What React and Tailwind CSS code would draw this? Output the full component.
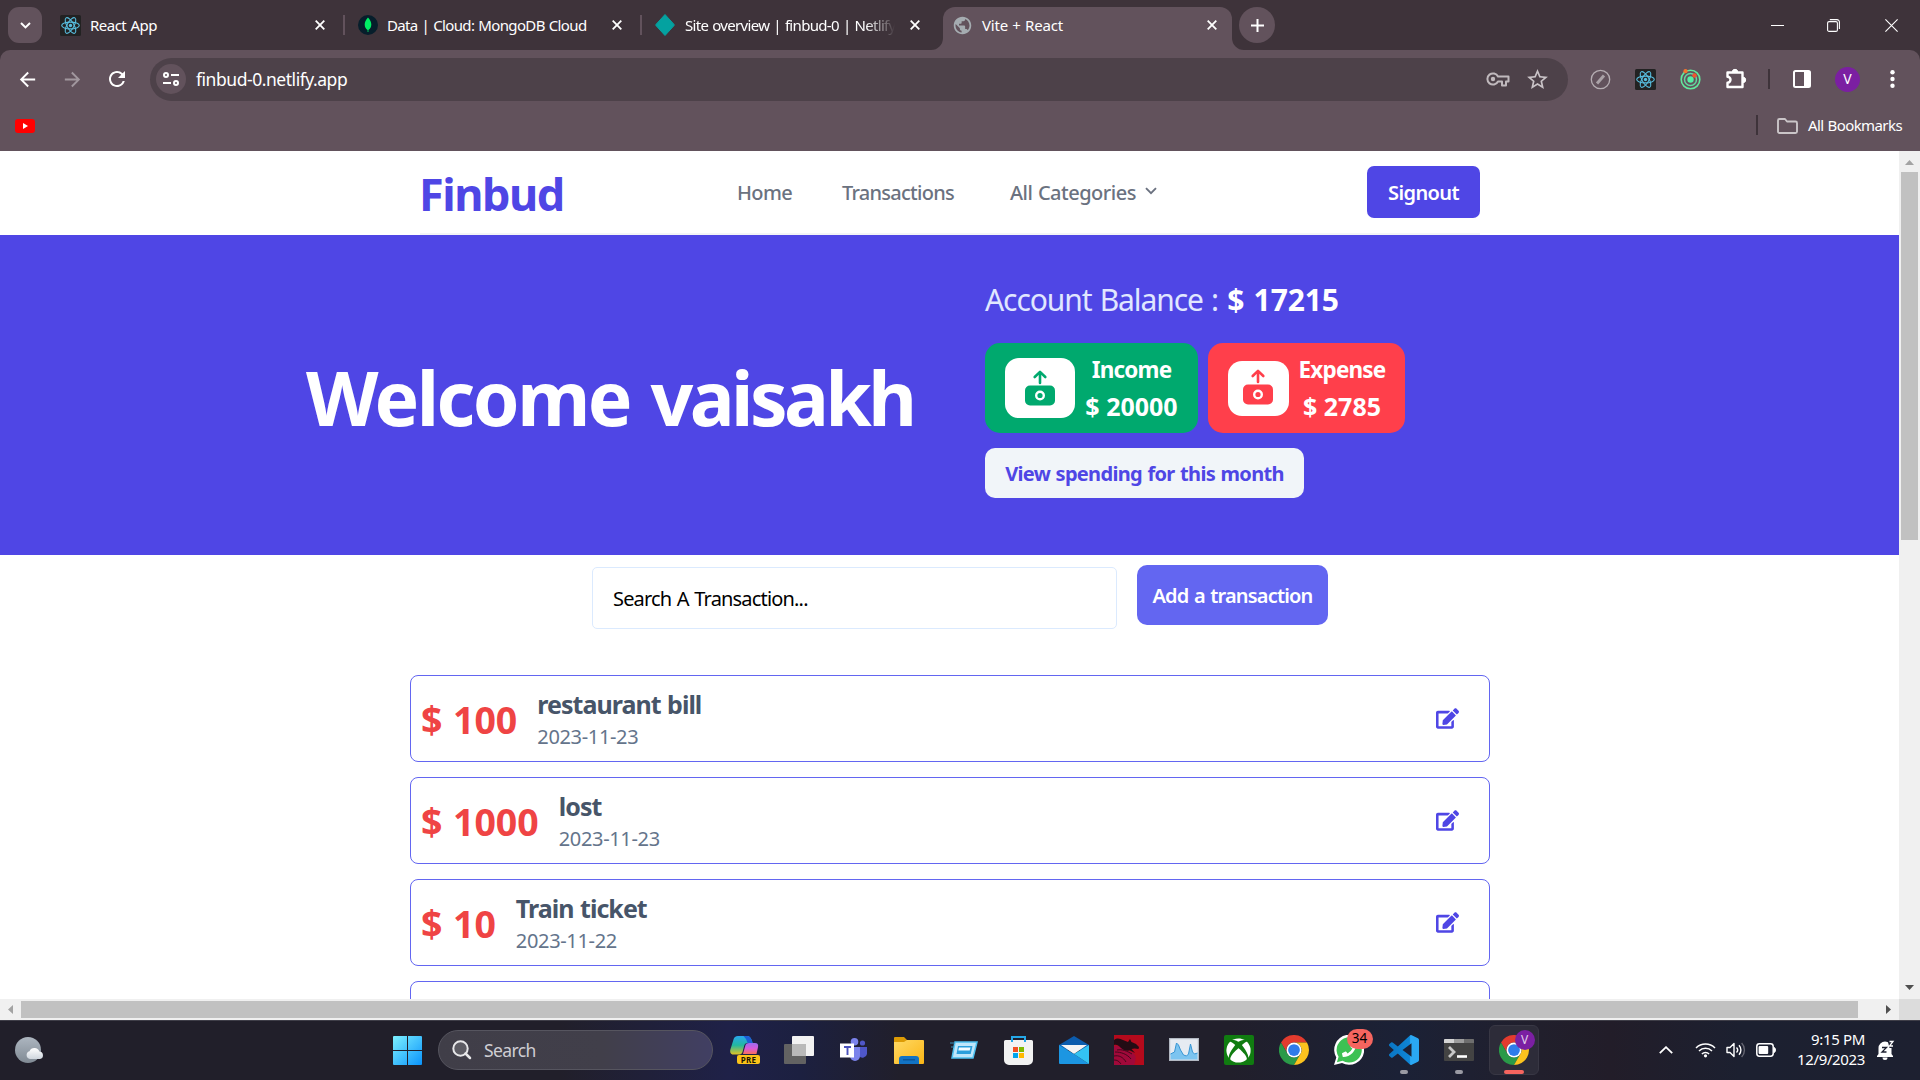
import React from 'react';
import { MdArrowBack, MdArrowForward, MdRefresh, MdOutlineVpnKey, MdStarBorder, MdFolderOpen, MdPublic } from 'react-icons/md';
import { FaEdit, FaXbox, FaPhoneAlt } from 'react-icons/fa';

/* ---------- shared glyphs ---------- */

function CloseGlyph() {
  return (
    <svg className="h-[10px] w-[10px] shrink-0" viewBox="0 0 10 10" stroke="#fff" strokeWidth="1.8">
      <path d="M.7.7 9.3 9.3M9.3.7.7 9.3" />
    </svg>
  );
}

function ReactBadge() {
  return (
    <svg className="h-[21px] w-[21px] shrink-0" viewBox="0 0 21 21" fill="none">
      <rect width="21" height="21" rx="1.5" fill="#222" />
      <g stroke="#58bfe0" strokeWidth="1.1">
        <ellipse cx="10.5" cy="10.5" rx="8.8" ry="3.4" />
        <ellipse cx="10.5" cy="10.5" rx="8.8" ry="3.4" transform="rotate(60 10.5 10.5)" />
        <ellipse cx="10.5" cy="10.5" rx="8.8" ry="3.4" transform="rotate(120 10.5 10.5)" />
      </g>
      <circle cx="10.5" cy="10.5" r="1.7" fill="#58bfe0" />
    </svg>
  );
}

function ChromeLogo() {
  return (
    <svg className="h-[30px] w-[30px]" viewBox="0 0 48 48">
      <path fill="#e33b2e" d="M24 12H44.78A24 24 0 0 0 3.2 12L13.6 30A12 12 0 0 1 24 12Z" />
      <path fill="#2a9a48" d="M3.2 12A24 24 0 0 0 24 48L34.4 30A12 12 0 0 1 13.6 30Z" />
      <path fill="#fcc31e" d="M24 48A24 24 0 0 0 44.78 12H24A12 12 0 0 1 34.4 30Z" />
      <circle cx="24" cy="24" r="12" fill="#fff" />
      <circle cx="24" cy="24" r="9.4" fill="#2f7bea" />
    </svg>
  );
}

/* ---------- browser chrome ---------- */

function TabStrip() {
  return (
    <div className="flex h-[50px] items-center bg-[#3e333a] text-[15px] leading-[20px] whitespace-nowrap text-white">
      <div className="ml-[8px] flex h-[36px] w-[34px] items-center justify-center rounded-[11px] bg-[#62525c]">
        <svg className="h-[7px] w-[11px]" viewBox="0 0 11 7" fill="none" stroke="#fff" strokeWidth="2">
          <path d="M1 1 5.5 5.4 10 1" />
        </svg>
      </div>

      <div className="ml-[18px] flex w-[265px] items-center">
        <ReactBadge />
        <span className="ml-[9px] tracking-[-0.034em] [word-spacing:0.05em]">React App</span>
        <span className="ml-auto"><CloseGlyph /></span>
      </div>
      <div className="ml-[18px] h-[20px] w-[2px] bg-[#62525c]" />

      <div className="ml-[13px] flex w-[264px] items-center">
        <svg className="h-[20px] w-[20px]" viewBox="0 0 20 20">
          <circle cx="10" cy="10" r="10" fill="#061e2b" />
          <path d="M10 2.600c2.200 2.400 3.300 4.400 3.300 7 0 2.400-1.100 4.200-2.900 5.500v2h-.8v-2C7.800 13.800 6.700 12 6.700 9.600c0-2.600 1.100-4.600 3.300-7z" fill="#00ed64" />
        </svg>
        <span className="ml-[9px] tracking-[-0.043em] [word-spacing:0.05em]">Data | Cloud: MongoDB Cloud</span>
        <span className="ml-auto"><CloseGlyph /></span>
      </div>
      <div className="ml-[18px] h-[20px] w-[2px] bg-[#62525c]" />

      <div className="ml-[13px] flex w-[265px] items-center">
        <svg className="h-[24px] w-[20px] shrink-0" viewBox="0 0 20 24">
          <path d="M10 1.500 19 11.400a.9.9 0 0 1 0 1.200L10 22.500 1 12.600a.9.9 0 0 1 0-1.200z" fill="#04a2a0" stroke="#04a2a0" strokeWidth="1" strokeLinejoin="round" />
        </svg>
        <span className="ml-[10px] w-[210px] overflow-hidden tracking-[-0.045em] [mask-image:linear-gradient(to_right,#000_86%,transparent)] [word-spacing:0.05em]">
          Site overview | finbud-0 | Netlify
        </span>
        <span className="ml-auto"><CloseGlyph /></span>
      </div>

      <div className="relative ml-[23px] flex h-[43px] w-[289px] items-center self-end rounded-t-[12px] bg-[#62525c] pb-[7px] pl-[10px]">
        <svg className="absolute bottom-0 -left-[12px] h-[12px] w-[12px]" viewBox="0 0 12 12">
          <path d="M12 0v12H0A12 12 0 0 0 12 0z" fill="#62525c" />
        </svg>
        <svg className="absolute -right-[12px] bottom-0 h-[12px] w-[12px]" viewBox="0 0 12 12">
          <path d="M0 0v12h12A12 12 0 0 1 0 0z" fill="#62525c" />
        </svg>
        <MdPublic className="-ml-[1px] h-[21px] w-[21px] text-[#a5acb1]" />
        <span className="ml-[9px] tracking-[-0.012em] [word-spacing:0.04em]">Vite + React</span>
        <span className="mr-[15px] ml-auto"><CloseGlyph /></span>
      </div>

      <div className="ml-[7px] flex h-[36px] w-[36px] items-center justify-center rounded-full bg-[#62525c]">
        <svg className="h-[13px] w-[13px]" viewBox="0 0 13 13" stroke="#fff" strokeWidth="2">
          <path d="M6.500 0v13M0 6.500h13" />
        </svg>
      </div>

      <div className="mr-[22px] ml-auto flex items-center">
        <div className="h-[1px] w-[13px] bg-white" />
        <svg className="ml-[43px] h-[13px] w-[13px]" viewBox="0 0 13 13" fill="none" stroke="#fff" strokeWidth="1.100">
          <rect x=".6" y="2.600" width="9.800" height="9.800" rx="1.500" />
          <path d="M2.800.6h7.200a2.400 2.400 0 0 1 2.400 2.400v7" />
        </svg>
        <svg className="ml-[45px] h-[13px] w-[13px]" viewBox="0 0 13 13" stroke="#fff" strokeWidth="1.100">
          <path d="M.4.4 12.600 12.600M12.600.4.4 12.600" />
        </svg>
      </div>
    </div>
  );
}

function Toolbar() {
  return (
    <div className="bg-[#3e333a]">
      <div className="flex h-[58px] items-center rounded-t-[10px] bg-[#62525c]">
        <MdArrowBack className="ml-[16px] h-[23px] w-[23px] text-white" />
        <MdArrowForward className="ml-[22px] h-[23px] w-[23px] text-[#a1979e]" />
        <MdRefresh className="ml-[21px] h-[24px] w-[24px] text-white" />
        <div className="ml-[21px] flex h-[43px] w-[1418px] items-center rounded-full bg-[#4d4149]">
          <div className="ml-[6px] flex h-[30px] w-[30px] items-center justify-center rounded-full bg-[#62525c]">
            <svg className="h-[14px] w-[16px]" viewBox="0 0 16 14" fill="none" stroke="#fff" strokeWidth="2">
              <circle cx="3" cy="3" r="2" />
              <path d="M8 3h8M0 11h8" />
              <circle cx="13" cy="11" r="2" />
            </svg>
          </div>
          <span className="ml-[10px] text-[17.5px] leading-[24px] tracking-[-0.026em] text-white">finbud-0.netlify.app</span>
          <svg className="ml-auto h-[16px] w-[24px]" viewBox="0 0 24 16" fill="none" stroke="#c0b9bd" strokeWidth="2">
            <path d="M12 5.500A5.600 5.600 0 1 0 12 10.500h4v4h4v-4h2.500v-5z" strokeLinejoin="round" />
            <circle cx="7" cy="8" r="2.200" fill="#c0b9bd" stroke="none" />
          </svg>
          <MdStarBorder className="mr-[18px] ml-[15px] h-[25px] w-[25px] text-[#c9c3c7]" />
        </div>
        <svg className="ml-[22px] h-[21px] w-[21px]" viewBox="0 0 21 21" fill="none">
          <circle cx="10.500" cy="10.500" r="9.200" stroke="#b5adb2" strokeWidth="1.300" />
          <path d="m7 14.500 7-8" stroke="#aaa2a7" strokeWidth="3" />
        </svg>
        <div className="ml-[24px]"><ReactBadge /></div>
        <svg className="ml-[24px] h-[21px] w-[21px]" viewBox="0 0 21 21" fill="none">
          <circle cx="10.500" cy="10.500" r="9.300" stroke="#62e89c" strokeWidth="1.600" />
          <circle cx="10.500" cy="10.500" r="6" stroke="#62d8a0" strokeWidth="1.500" />
          <circle cx="10.500" cy="10.500" r="3.200" fill="#54f0a4" />
          <circle cx="5.500" cy="2.200" r="2.100" fill="#f5762c" />
          <circle cx="14.500" cy="6.500" r="2.200" fill="#f1562f" />
        </svg>
        <svg className="ml-[24px] h-[22px] w-[22px]" viewBox="0 0 22 22" fill="none">
          <path d="M2.500 4.500h15v14.500H2.500v-4.200a3 3 0 0 0 0-6z" stroke="#fff" strokeWidth="2.400" strokeLinejoin="round" />
          <path d="M7.300 4a2.700 2.700 0 0 1 5.400 0zM18 9.200a2.700 2.700 0 0 1 0 5.400z" fill="#fff" stroke="#fff" />
        </svg>
        <div className="ml-[21px] h-[20px] w-[2px] bg-[#3e333a]" />
        <svg className="ml-[23px] h-[18px] w-[18px]" viewBox="0 0 18 18">
          <rect x="1" y="1" width="16" height="16" rx="1.500" fill="none" stroke="#fff" strokeWidth="2" />
          <rect x="11" y="1" width="6" height="16" fill="#fff" />
        </svg>
        <div className="ml-[24px] flex h-[25px] w-[25px] items-center justify-center rounded-full bg-[#7b1fa2] text-[14px] leading-none text-white">V</div>
        <svg className="ml-[30px] h-[18px] w-[5px]" viewBox="0 0 5 18" fill="#fff">
          <circle cx="2.500" cy="2.200" r="2.200" />
          <circle cx="2.500" cy="9" r="2.200" />
          <circle cx="2.500" cy="15.800" r="2.200" />
        </svg>
      </div>
    </div>
  );
}

function BookmarksBar() {
  return (
    <div className="flex h-[43px] items-center bg-[#62525c] pb-[7px]">
      <svg className="ml-[15px] h-[14px] w-[20px]" viewBox="0 0 20 14">
        <rect width="20" height="14" rx="3" fill="#f00" />
        <path d="M8 4v6l5-3z" fill="#fff" />
      </svg>
      <div className="mb-[2px] ml-auto h-[20px] w-[2px] bg-[#3e333a]" />
      <svg className="mb-px ml-[19px] h-[16px] w-[21px]" viewBox="0 0 21 16" fill="none" stroke="#cac5c8" strokeWidth="1.900">
        <path d="M1 2.500A1.500 1.500 0 0 1 2.500 1H8l2 2.500h8.500A1.500 1.500 0 0 1 20 5v8.500a1.500 1.500 0 0 1-1.500 1.500h-16A1.500 1.500 0 0 1 1 13.500z" strokeLinejoin="round" />
      </svg>
      <span className="mr-[18px] mb-[2px] ml-[10px] text-[15px] leading-[20px] tracking-[-0.039em] text-white [word-spacing:0.04em]">All Bookmarks</span>
    </div>
  );
}

/* ---------- page ---------- */

function NavBar() {
  return (
    <nav className="h-[84px] shrink-0">
      <div className="ml-[420px] flex h-[84px] w-[1060px] items-center border-b-2 border-[#f3f4f6] text-[20px] leading-[30px] font-medium whitespace-nowrap text-[#6b7280]">
        <span className="-ml-px w-[318px] pt-[4px] text-[45px] leading-[50px] font-bold tracking-[-0.033em] text-[#4f46e5]">Finbud</span>
        <span className="w-[105px] pt-[2px] tracking-[-0.03em]">Home</span>
        <span className="w-[168px] pt-[2px] tracking-[-0.037em]">Transactions</span>
        <span className="w-[135px] pt-[2px] tracking-[-0.025em] [word-spacing:0.04em]">All Categories</span>
        <svg className="-mt-[2px] h-[8px] w-[12px]" viewBox="0 0 12 8" fill="none" stroke="#6b7280" strokeWidth="1.900">
          <path d="M1 1.200 6 6.200 11 1.200" />
        </svg>
        <button className="ml-auto h-[52px] w-[113px] rounded-[7px] bg-[#4f46e5] pt-[2px] font-semibold tracking-[-0.03em] text-white">Signout</button>
      </div>
    </nav>
  );
}

function MoneyIcon({ color }) {
  return (
    <svg className="h-[36px] w-[30px]" viewBox="0 0 30 36" fill="none">
      <path d="M15 13V2.500M9.700 7 15 1.900 20.300 7" stroke={color} strokeWidth="2.600" strokeLinecap="round" strokeLinejoin="round" />
      <rect y="15.500" width="30" height="20" rx="5" fill={color} />
      <circle cx="15" cy="25.500" r="3.800" stroke="#fff" strokeWidth="2.400" />
    </svg>
  );
}

function Hero() {
  return (
    <section className="flex h-[320px] shrink-0 bg-[#4f46e5] whitespace-nowrap text-white">
      <h1 className="ml-[306px] w-[679px] pt-[115px] text-[75px] leading-[94px] font-bold tracking-[-0.0335em] [word-spacing:0.045em]">
        Welcome <span className="tracking-[-0.0475em]">vaisakh</span>
      </h1>
      <div className="pt-[45px]">
        <p className="text-[30px] leading-[40px] tracking-[-0.036em] text-[#e0e7ff] [word-spacing:0.05em]">
          Account Balance : <b className="ml-[1px] font-bold tracking-[-0.003em] text-white">$ 17215</b>
        </p>
        <div className="mt-[23px] flex gap-[10px] text-center font-bold">
          <div className="flex h-[90px] w-[213px] items-center rounded-[15px] bg-[#00a96e] pl-[20px]">
            <div className="flex h-[60px] w-[70px] items-center justify-center rounded-[14px] bg-white"><MoneyIcon color="#00a96e" /></div>
            <div className="w-[113px]">
              <p className="text-[22.5px] leading-[36px] tracking-[-0.036em]">Income</p>
              <p className="text-[25px] leading-[36px]">$ 20000</p>
            </div>
          </div>
          <div className="flex h-[90px] w-[197px] items-center rounded-[15px] bg-[#ff3f4b] pl-[20px]">
            <div className="flex h-[55px] w-[61px] items-center justify-center rounded-[14px] bg-white pr-px pb-[2px]"><MoneyIcon color="#ff3f4b" /></div>
            <div className="w-[106px]">
              <p className="text-[22.5px] leading-[36px] tracking-[-0.036em]">Expense</p>
              <p className="text-[25px] leading-[36px]">$ 2785</p>
            </div>
          </div>
        </div>
        <button className="mt-[15px] h-[50px] w-[319px] rounded-[10px] bg-[#f1f5f9] pt-[2px] text-[20px] leading-[30px] font-bold tracking-[-0.0335em] text-[#4f46e5] [word-spacing:0.045em]">
          View spending for this month
        </button>
      </div>
    </section>
  );
}

const transactions = [
  { amount: '$ 100', title: 'restaurant bill', date: '2023-11-23' },
  { amount: '$ 1000', title: 'lost', date: '2023-11-23' },
  { amount: '$ 10', title: 'Train ticket', date: '2023-11-22' },
];

function TransactionCard({ amount, title, date }) {
  return (
    <li className="flex h-[87px] shrink-0 rounded-[8px] border border-[#6366f1] pr-[30px] pl-[10px]">
      <span className="pt-[19px] text-[37.5px] leading-[50px] font-bold text-[#ef4444] [word-spacing:0.02em]">{amount}</span>
      <div className="ml-[20px] pt-[12px]">
        <p className="text-[25px] leading-[32px] font-bold tracking-[-0.039em] text-[#475569] [word-spacing:0.04em]">{title}</p>
        <p className="mt-px text-[20px] leading-[31px] tracking-[-0.017em] text-[#64748b]">{date}</p>
      </div>
      <FaEdit className="mt-[32px] ml-auto h-[21px] w-[23px] text-[#4f46e5]" />
    </li>
  );
}

function Page() {
  return (
    <main className="flex h-[848px] w-[1899px] flex-col overflow-hidden bg-white">
      <NavBar />
      <Hero />
      <div className="mt-[10px] ml-[592px] flex h-[110px] shrink-0 items-start gap-[20px] text-[20px]">
        <input
          className="mt-[2px] h-[62px] w-[525px] rounded-[5px] border border-[#dbeafe] px-[20px] tracking-[-0.041em] [word-spacing:0.055em] placeholder:text-black"
          placeholder="Search A Transaction..."
        />
        <button className="h-[60px] w-[191px] rounded-[10px] bg-[#6366f1] pt-[2px] font-semibold tracking-[-0.041em] text-white [word-spacing:0.05em]">Add a transaction</button>
      </div>
      <ul className="ml-[410px] flex w-[1080px] flex-col gap-[15px]">
        {transactions.map((t) => <TransactionCard key={t.title} {...t} />)}
        <li className="h-[87px] shrink-0 rounded-[8px] border border-[#6366f1]" />
      </ul>
    </main>
  );
}

function VerticalScrollbar() {
  return (
    <div className="flex h-[848px] w-[21px] flex-col items-center bg-[#f0f0f0]">
      <svg className="mt-[9px] h-[5px] w-[9px]" viewBox="0 0 9 5"><path d="M4.500 0 9 5H0z" fill="#a3a3a3" /></svg>
      <div className="mt-[7px] h-[368px] w-[17px] bg-[#c1c1c1]" />
      <svg className="mt-auto mb-[9px] h-[5px] w-[9px]" viewBox="0 0 9 5"><path d="M0 0h9L4.500 5z" fill="#4f4f4f" /></svg>
    </div>
  );
}

function HorizontalScrollbar() {
  return (
    <div className="flex h-[21px] items-center bg-[#f0f0f0]">
      <svg className="ml-[8px] h-[9px] w-[5px]" viewBox="0 0 5 9"><path d="M5 0v9L0 4.500z" fill="#a3a3a3" /></svg>
      <div className="ml-[8px] h-[17px] w-[1837px] bg-[#c1c1c1]" />
      <svg className="ml-[28px] h-[9px] w-[5px]" viewBox="0 0 5 9"><path d="M0 0v9l5-4.500z" fill="#4f4f4f" /></svg>
      <div className="ml-auto h-[21px] w-[21px] bg-[#dcdcdc]" />
    </div>
  );
}

/* ---------- taskbar ---------- */

function Slot({ children }) {
  return <div className="flex h-[60px] w-[55px] shrink-0 items-center justify-center">{children}</div>;
}

function Taskbar() {
  return (
    <div className="flex h-[60px] items-center border-t border-[#3f3e48] bg-[linear-gradient(90deg,#211f2a_0,#211f2a_560px,#1f2148_730px,#1c2040_800px,#211f2b_900px,#211f2b_1230px,#1b2136_1400px,#211f2c_1540px,#221d29_1610px,#1c2030_1740px,#1d2030_1920px)] pb-px text-white">
      <svg className="ml-[15px] h-[28px] w-[29px]" viewBox="0 0 29 28">
        <defs>
          <linearGradient id="moon" x1="0" y1="0" x2="0" y2="1"><stop stopColor="#adb6c0" /><stop offset="1" stopColor="#808a94" /></linearGradient>
          <linearGradient id="cloud" x1="0" y1="0" x2="0" y2="1"><stop stopColor="#fff" /><stop offset="1" stopColor="#cfd6de" /></linearGradient>
        </defs>
        <circle cx="13" cy="14" r="13" fill="url(#moon)" />
        <path d="M15 23a4 4 0 0 1-.5-7.800A5.300 5.300 0 0 1 24.400 15.500a3.800 3.800 0 0 1 .6 7.500z" fill="url(#cloud)" />
      </svg>

      <svg className="ml-[349px] h-[29px] w-[29px]" viewBox="0 0 29 29">
        <defs>
          <linearGradient id="win" gradientUnits="userSpaceOnUse" x1="0" y1="0" x2="29" y2="29"><stop stopColor="#7df1ff" /><stop offset="1" stopColor="#0a93fb" /></linearGradient>
        </defs>
        <path d="M1 0h13v14H0V1a1 1 0 0 1 1-1zM15 0h13a1 1 0 0 1 1 1v13H15zM0 15h14v14H1a1 1 0 0 1-1-1zM15 15h14v13a1 1 0 0 1-1 1H15z" fill="url(#win)" />
      </svg>

      <div className="ml-[16px] flex h-[40px] w-[275px] items-center rounded-full border border-[#56555f] bg-[linear-gradient(90deg,#403e48,#413f4a_60%,#413f63)]">
        <svg className="ml-[13px] h-[20px] w-[20px]" viewBox="0 0 20 20" fill="none" stroke="#e8e8ea" strokeWidth="2">
          <circle cx="8.500" cy="8.500" r="7.200" fill="#5d5c64" />
          <path d="m13.500 13.500 4.500 4.500" strokeWidth="2.500" strokeLinecap="round" />
        </svg>
        <span className="ml-[12px] text-[17.5px] leading-[24px] tracking-[-0.035em] text-[#cfced3]">Search</span>
      </div>

      <div className="ml-[3px] flex">
        <Slot>
          <svg className="ml-[2px] h-[28px] w-[30px]" viewBox="0 0 30 28">
            <defs>
              <linearGradient id="cpa" x1="0" y1="0" x2="0" y2="1"><stop stopColor="#2aa7ee" /><stop offset=".5" stopColor="#22b8a0" /><stop offset="1" stopColor="#e4c422" /></linearGradient>
              <linearGradient id="cpb" x1="0" y1="0" x2="0" y2="1"><stop stopColor="#9a6cf0" /><stop offset=".5" stopColor="#d85ad8" /><stop offset="1" stopColor="#f8705a" /></linearGradient>
            </defs>
            <path d="M8 0h9c3 0 4 2 5 5l.6 2h-5c-2 0-3 1-3.500 3l-1.600 6c-.5 1.500-1.500 2.500-3 2.500H4c-3 0-4.500-2-3.600-5L3.500 3.500C4 1.200 5.500 0 8 0z" fill="url(#cpa)" />
            <path d="M13.500 0H17c3 0 4 2 5 5l.6 2h-5L16 3z" fill="#1c5fd6" />
            <path d="M19 7h6c2.500 0 3.500 1.500 3 4l-1.500 7H13l2.500-9c.4-1.300 1.800-2 3.500-2z" fill="url(#cpb)" />
            <rect x="7" y="19" width="23" height="9" rx="2" fill="#fcc419" />
            <text x="18.500" y="26.600" fontSize="8" fontWeight="700" textAnchor="middle" fill="#1a1500" letterSpacing=".3">PRE</text>
          </svg>
        </Slot>
        <Slot>
          <svg className="h-[28px] w-[30px]" viewBox="0 0 30 28">
            <rect x="8" y="0" width="22" height="20" rx="1" fill="#f2f2f2" />
            <rect x="0" y="8" width="22" height="20" rx="1" fill="#626262" />
            <rect x="8" y="8" width="14" height="12" fill="#b9b9b9" />
          </svg>
        </Slot>
        <Slot>
          <svg className="-mt-px h-[24px] w-[27px]" viewBox="0 0 27 24">
            <circle cx="22.500" cy="5" r="2.600" fill="#4f57c9" />
            <circle cx="14.500" cy="3.800" r="3.800" fill="#7b83eb" />
            <path d="M19 9h8v7a4.500 4.500 0 0 1-8 2z" fill="#4f57c9" />
            <path d="M10 9h10v9a5 5 0 0 1-10 0z" fill="#7b83eb" />
            <rect y="5.500" width="14" height="14" fill="#fff" />
            <path d="M4 9h7M7.500 9v8" stroke="#4b53bc" strokeWidth="1.900" />
          </svg>
        </Slot>
        <Slot>
          <svg className="h-[27px] w-[30px]" viewBox="0 0 30 27">
            <defs><linearGradient id="fold" x1="0" y1="0" x2="1" y2="1"><stop stopColor="#ffd964" /><stop offset="1" stopColor="#fbb515" /></linearGradient></defs>
            <path d="M0 1a1 1 0 0 1 1-1h9l3 3v5H0z" fill="#dd9b05" />
            <path d="M0 5h10l3-2h16a1 1 0 0 1 1 1v22a1 1 0 0 1-1 1H1a1 1 0 0 1-1-1z" fill="url(#fold)" />
            <path d="M5 27v-5a3 3 0 0 1 3-3h14a3 3 0 0 1 3 3v5z" fill="#1273c4" />
            <path d="M9 22.800h12" stroke="#0a4f92" strokeWidth="1.200" />
          </svg>
        </Slot>
        <Slot>
          <svg className="h-[18px] w-[28px]" viewBox="0 0 28 18">
            <path d="M5 1h22l-4 16H2z" fill="#bfe6fa" stroke="#4cc0f0" strokeWidth="1.500" />
            <path d="M8 5h14.500l-1.800 8H6.500z" fill="#2b9fdc" />
            <path d="M9 6.500h11.500l-.8 3H8.300z" fill="#f3fbff" />
            <path d="M0 2h5M1 6h3" stroke="#3a8fb8" strokeWidth="1" />
          </svg>
        </Slot>
        <Slot>
          <svg className="h-[29px] w-[29px]" viewBox="0 0 29 29">
            <path d="M0 5.500A1.500 1.500 0 0 1 1.500 4h26A1.500 1.500 0 0 1 29 5.500V24a5 5 0 0 1-5 5H5a5 5 0 0 1-5-5z" fill="#f2f2f2" />
            <path d="M8 6V1h13v5" fill="none" stroke="#25a8e8" strokeWidth="2" />
            <rect x="9" y="11" width="5" height="5" fill="#f25022" />
            <rect x="15" y="11" width="5" height="5" fill="#7fba00" />
            <rect x="9" y="17" width="5" height="5" fill="#00a4ef" />
            <rect x="15" y="17" width="5" height="5" fill="#ffb900" />
          </svg>
        </Slot>
        <Slot>
          <svg className="h-[28px] w-[30px]" viewBox="0 0 30 28">
            <path d="M0 9 15 0l15 9v5H0z" fill="#0c5cad" />
            <path d="M2 9h26L15 18z" fill="#f4f4f4" />
            <path d="M0 9v18a1 1 0 0 0 1 1h29L15 18z" fill="#1c96e2" />
            <path d="M30 9v19L15 18z" fill="#33c3f3" />
          </svg>
        </Slot>
        <Slot>
          <svg className="h-[30px] w-[30px]" viewBox="0 0 30 30">
            <rect width="30" height="30" fill="#b50a1c" />
            <path d="M0 11c6-1 9 4 17 6 5 2 6 6 3 13H0z" fill="#a0093a" />
            <path d="M0 5c4-3 6-1 9 0l5 2 2-3 1.500 3 4.500 2 3 3-.5 2-4-.5-3 .5 3.500 4-5-2.500c-4 .5-7-.5-9-2.500-2-2-4-4-7-3z" fill="#220c14" />
            <path d="M1 17c6 0 12 2 16 7M0 21c5-1 9 1 12 6M3 15c5-1 10 1 15 4M0 25c3 0 5 1 7 4" fill="none" stroke="#3a0718" strokeWidth=".9" />
          </svg>
        </Slot>
        <Slot>
          <svg className="-mt-px h-[23px] w-[30px]" viewBox="0 0 30 23">
            <rect x=".6" y=".6" width="28.800" height="21.800" fill="#e6ebf2" stroke="#b2b8c2" strokeWidth="1.200" />
            <path d="M1.500 16l4-2 2-9 2 2 2 5 3 5 3 1 2-2 2-10 2 8 2 2 3-1v6.500h-27z" fill="#7cc4f0" />
            <path d="M1.500 16l4-2 2-9 2 2 2 5 3 5 3 1 2-2 2-10 2 8 2 2 3-1" fill="none" stroke="#3795d4" />
          </svg>
        </Slot>
        <Slot>
          <div className="flex h-[30px] w-[30px] items-center justify-center rounded-[2px] bg-[#107c10]">
            <FaXbox className="h-[25px] w-[25px] text-white" />
          </div>
        </Slot>
        <Slot><ChromeLogo /></Slot>
        <Slot>
          <div className="relative h-[30px] w-[30px]">
            <svg className="h-[30px] w-[30px]" viewBox="0 0 30 30">
              <path d="M0 30 2.300 22.500A15 15 0 1 1 8 28z" fill="#fff" />
              <path d="M2.900 27.200 4.600 21.800A12.600 12.600 0 1 1 8.600 25.700z" fill="#3dc153" />
            </svg>
            <FaPhoneAlt className="absolute top-[8px] left-[8px] h-[14px] w-[14px] -scale-x-100 text-white" />
            <div className="absolute -top-[6px] left-[13px] flex h-[20px] w-[26px] items-center justify-center rounded-full bg-[#f5655f] text-[13.5px] leading-none text-black">34</div>
          </div>
        </Slot>
        <Slot>
          <div className="relative">
            <svg className="h-[30px] w-[30px]" viewBox="0 0 24 24">
              <defs><linearGradient id="vsc"><stop stopColor="#0a75c2" /><stop offset=".68" stopColor="#0f86d6" /><stop offset=".72" stopColor="#2aa8f4" /></linearGradient></defs>
              <path fill="url(#vsc)" d="M23.15 2.587L18.21.21a1.494 1.494 0 0 0-1.705.29l-9.46 8.63-4.12-3.128a.999.999 0 0 0-1.276.057L.327 7.261A1 1 0 0 0 .326 8.74L3.899 12 .326 15.26a1 1 0 0 0 .001 1.479L1.65 17.94a.999.999 0 0 0 1.276.057l4.12-3.128 9.46 8.63a1.492 1.492 0 0 0 1.704.29l4.942-2.377A1.5 1.5 0 0 0 24 20.06V3.939a1.5 1.5 0 0 0-.85-1.352zm-5.146 14.861L10.826 12l7.178-5.448v10.896z" />
            </svg>
            <div className="absolute top-[35px] left-[11px] h-[4px] w-[8px] rounded-full bg-[#9a9aa3]" />
          </div>
        </Slot>
        <Slot>
          <div className="relative">
            <svg className="h-[22px] w-[30px]" viewBox="0 0 30 22">
              <rect width="30" height="22" rx="1" fill="#434343" />
              <path d="M0 1a1 1 0 0 1 1-1h9v4H0z" fill="#d4d4d4" />
              <path d="M10 0h10v4H10z" fill="#9d9d9d" />
              <path d="M20 0h9a1 1 0 0 1 1 1v3H20z" fill="#6e6e6e" />
              <path d="m5 8 5 5-5 5" fill="none" stroke="#c8c8c8" strokeWidth="2.800" />
              <path d="M13 17.500h10" stroke="#fff" strokeWidth="2.600" />
            </svg>
            <div className="absolute top-[31px] left-[11px] h-[4px] w-[8px] rounded-full bg-[#9a9aa3]" />
          </div>
        </Slot>
        <Slot>
          <div className="relative flex h-[50px] w-[50px] items-center justify-center rounded-[6px] border border-[#383744] bg-[#2d2c39]">
            <ChromeLogo />
            <div className="absolute top-[4px] left-[25px] flex h-[20px] w-[20px] items-center justify-center rounded-full bg-[#7b1fa2] text-[12px] leading-none text-[#e2cdea]">V</div>
            <div className="absolute bottom-0 left-[14px] h-[4px] w-[20px] rounded-full bg-[#f5655f]" />
          </div>
        </Slot>
      </div>

      <svg className="ml-[118px] h-[8px] w-[14px]" viewBox="0 0 14 8" fill="none" stroke="#fff" strokeWidth="1.800">
        <path d="M.8 7.200 7 1.200l6.200 6" />
      </svg>
      <svg className="ml-[22px] h-[16px] w-[21px]" viewBox="0 0 21 16" fill="none" stroke="#fff" strokeWidth="1.500">
        <path d="M1 6a13.500 13.500 0 0 1 19 0M4 9a9.200 9.200 0 0 1 13 0M6.900 12a5.100 5.100 0 0 1 7.200 0" />
        <circle cx="10.500" cy="13.800" r="1.600" fill="#fff" stroke="none" />
      </svg>
      <svg className="ml-[10px] h-[16px] w-[20px]" viewBox="0 0 20 16" fill="none" stroke="#fff" strokeWidth="1.400">
        <path d="M1 5.500h3l4-4v13l-4-4H1z" strokeLinejoin="round" />
        <path d="M10.500 5.500a3.600 3.600 0 0 1 0 5M13 3.200a7 7 0 0 1 0 9.600" />
        <path d="M15.600 1a10 10 0 0 1 0 14" stroke="#666672" />
      </svg>
      <svg className="ml-[10px] h-[14px] w-[20px]" viewBox="0 0 20 14" fill="none">
        <rect x=".8" y=".8" width="16.400" height="12.400" rx="2.600" stroke="#fff" strokeWidth="1.500" />
        <rect x="2.600" y="2.900" width="9.600" height="8.200" rx="1" fill="#fff" />
        <path d="M18 4.500c2 .5 2 4.500 0 5z" fill="#fff" stroke="#fff" />
      </svg>
      <div className="mb-[2px] ml-auto text-right text-[15px] leading-[20px]">
        <p className="tracking-[-0.022em]">9:15 PM</p>
        <p className="tracking-[-0.024em]">12/9/2023</p>
      </div>
      <svg className="mr-[25px] ml-[12px] h-[20px] w-[18px]" viewBox="0 0 18 20">
        <path d="M1.500 14V8a6.500 6.500 0 0 1 13 0v6l1.500 2v1H0v-1z" fill="#fff" />
        <path d="M5.500 17.500h5a2.500 2.500 0 0 1-5 0z" fill="#fff" />
        <path d="M5 7.500h4.500L5 12h4.500" fill="none" stroke="#1d2030" strokeWidth="1.300" />
        <path d="M10.500 0H18v8h-5.500z" fill="#1d2030" />
        <path d="M12.500 1.500H16L12.500 6H16" fill="none" stroke="#fff" strokeWidth="1.300" />
      </svg>
    </div>
  );
}

export default function App() {
  return (
    <div className="flex h-[1080px] w-[1920px] flex-col overflow-hidden bg-white font-['Noto_Sans','Open_Sans',sans-serif]">
      <TabStrip />
      <Toolbar />
      <BookmarksBar />
      <div className="flex">
        <Page />
        <VerticalScrollbar />
      </div>
      <HorizontalScrollbar />
      <Taskbar />
    </div>
  );
}
